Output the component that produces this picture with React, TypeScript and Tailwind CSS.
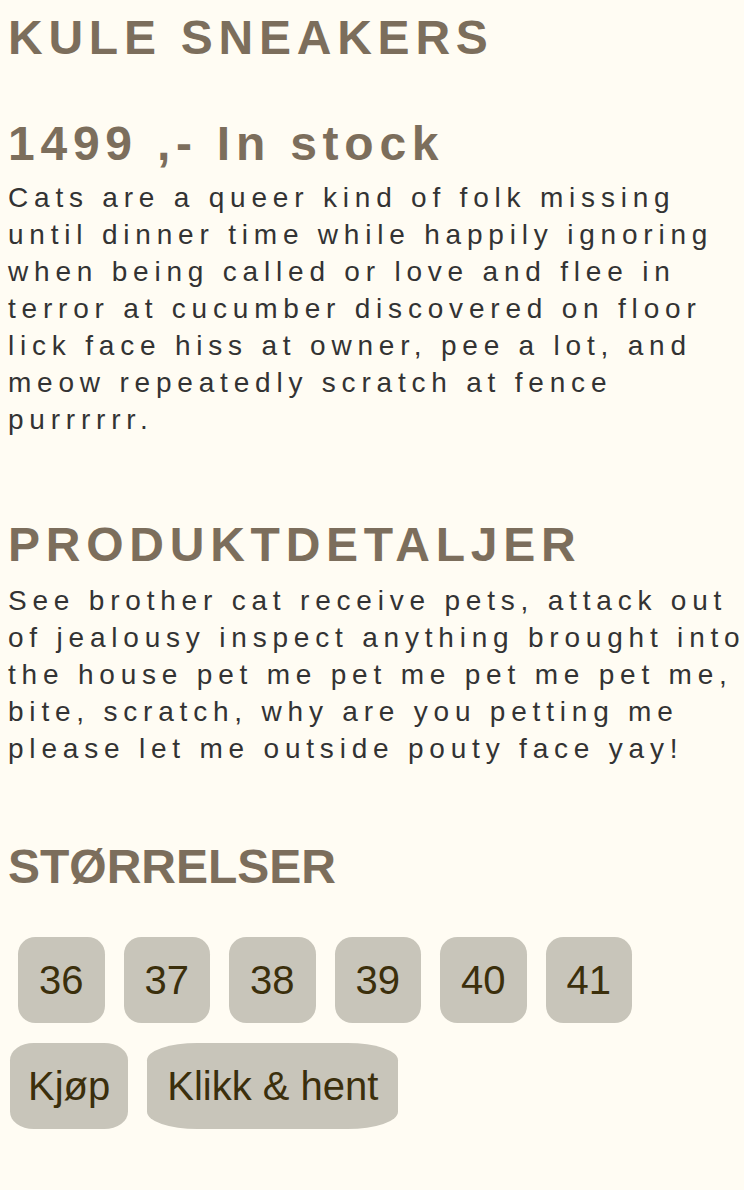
import React from "react";

const sizes = ["36", "37", "38", "39", "40", "41"];

// shared look for the size and action buttons
const btn =
  "rounded-[20%] bg-[#c8c5ba] py-5 text-[40px] leading-[46px] text-[#3b2f0c]";

export default function App() {
  return (
    <div className="min-h-screen overflow-x-hidden bg-[#fffcf3] pl-2 pb-16 font-['Liberation_Sans',Arial,sans-serif]">
      <h1 className="mt-[10px] text-[48px] leading-[56px] font-bold tracking-[0.12em] text-[#7c6e5c]">
        KULE SNEAKERS
      </h1>

      <h2 className="mt-[50px] text-[48px] leading-[56px] font-bold tracking-[0.12em] text-[#7c6e5c]">
        1499 ,- In stock
      </h2>
      <p className="mt-[7px] w-[752px] text-[28px] leading-[37px] tracking-[5.8px] text-[#333333]">
        Cats are a queer kind of folk missing until dinner time while happily ignoring when being
        called or love and flee in terror at cucumber discovered on floor lick face hiss at owner,
        pee a lot, and meow repeatedly scratch at fence purrrrrr.
      </p>

      <h3 className="mt-[79px] text-[48px] leading-[56px] font-bold tracking-[0.12em] text-[#7c6e5c]">
        PRODUKTDETALJER
      </h3>
      <p className="mt-[9px] w-[752px] text-[28px] leading-[37px] tracking-[5.8px] text-[#333333]">
        See brother cat receive pets, attack out of jealousy inspect anything brought into the house
        pet me pet me pet me pet me, bite, scratch, why are you petting me please let me outside
        pouty face yay!
      </p>

      <h3 className="mt-[72px] text-[48px] leading-[56px] font-bold text-[#7c6e5c]">STØRRELSER</h3>

      <div className="mt-[42px] ml-[10px] flex gap-[19px]">
        {sizes.map((s) => (
          <button key={s} type="button" className={`${btn} px-[21px]`}>
            {s}
          </button>
        ))}
      </div>

      <div className="mt-5 ml-[2px] flex gap-[19px]">
        <button type="button" className={`${btn} px-[18px]`}>
          Kjøp
        </button>
        <button type="button" className={`${btn} px-5`}>
          Klikk &amp; hent
        </button>
      </div>
    </div>
  );
}
